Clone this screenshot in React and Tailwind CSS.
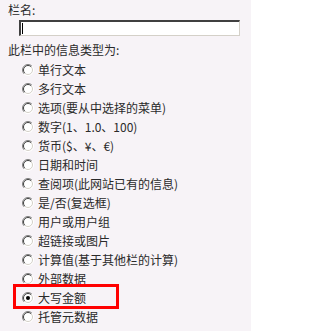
const TYPES = [
  '单行文本',
  '多行文本',
  '选项(要从中选择的菜单)',
  '数字(1、1.0、100)',
  '货币($、¥、€)',
  '日期和时间',
  '查阅项(此网站已有的信息)',
  '是/否(复选框)',
  '用户或用户组',
  '超链接或图片',
  '计算值(基于其他栏的计算)',
  '外部数据',
  '大写金额',
  '托管元数据',
];

const Radio = ({ checked }) => (
  <svg width="12" height="12" viewBox="0 0 12 12" className="shrink-0">
    <circle cx="6" cy="6" r="5.5" fill="#fff" />
    {/* outer ring */}
    <path d="M2.1 9.9 A5.5 5.5 0 0 1 9.9 2.1" fill="none" stroke="#808080" strokeWidth="1" />
    <path d="M9.9 2.1 A5.5 5.5 0 0 1 2.1 9.9" fill="none" stroke="#ffffff" strokeWidth="1" />
    {/* inner ring */}
    <path d="M2.8 9.2 A4.5 4.5 0 0 1 9.2 2.8" fill="none" stroke="#404040" strokeWidth="1" />
    <path d="M9.2 2.8 A4.5 4.5 0 0 1 2.8 9.2" fill="none" stroke="#d4d0c8" strokeWidth="1" />
    {checked && <circle cx="6" cy="6" r="2" fill="#000" />}
  </svg>
);

export default function App() {
  const selected = '大写金额';

  return (
    <div
      className="relative w-[251px] h-[331px] overflow-hidden bg-[#f7f3f7] text-[12px] text-[#2a2a2a] pl-2 pt-[3px]"
      style={{ fontFamily: '"Noto Sans CJK SC", "Noto Sans", sans-serif' }}
    >
      <div className="leading-[14px] h-[14px]">栏名:</div>

      {/* name field */}
      <div className="mt-[3px] ml-[11px] w-[221px] h-[16px] bg-white border-t-2 border-l-2 border-t-[#404040] border-l-[#404040] border-b border-r border-b-[#d4d0c8] border-r-[#d4d0c8] flex items-center pl-[1px]">
        <div className="w-[1px] h-[11px] bg-black" />
      </div>

      <div className="mt-[7px] leading-[14px] h-[14px]">此栏中的信息类型为:</div>

      <div className="mt-[3px] flex flex-col">
        {TYPES.map((t) => (
          <div key={t} className="h-[19px] flex items-center gap-[4px] pl-[14px] whitespace-nowrap">
            <Radio checked={t === selected} />
            <span className="leading-[14px]">{t}</span>
          </div>
        ))}
      </div>

      {/* highlight annotation */}
      <div className="absolute left-[13px] top-[284px] w-[106px] h-[25px] border-[3px] border-[#ff0000]" />
    </div>
  );
}
